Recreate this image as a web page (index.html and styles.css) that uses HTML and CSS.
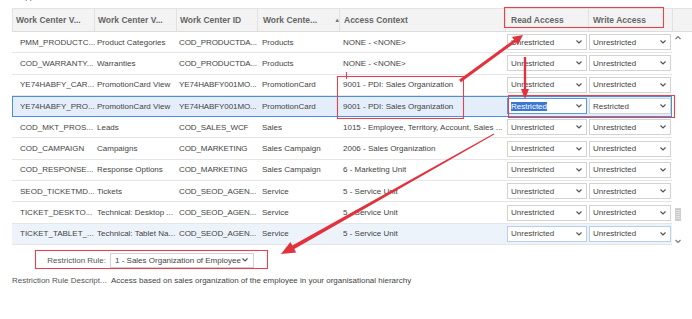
FILE: index.html
```html
<!DOCTYPE html>
<html lang="en">
<head>
    <meta charset="UTF-8">
    <meta name="viewport" content="width=device-width, initial-scale=1.0">
    <title>Access Restrictions</title>
    <link rel="stylesheet" href="styles.css">
</head>
<body>
    <div class="page">
        <div class="top"><span>Application</span></div>

        <div class="table">
            <div class="thead">
                <div class="th c1">Work Center V...</div>
                <div class="th c2">Work Center V...</div>
                <div class="th c3">Work Center ID</div>
                <div class="th c4">Work Cente... <span class="sort">&#9650;</span></div>
                <div class="th c5">Access Context</div>
                <div class="th c6">Read Access</div>
                <div class="th c7">Write Access</div>
                <div class="th cs"></div>
            </div>

            <div class="tbody">
                <div class="rows">
                    <div class="row">
                        <div class="td c1">PMM_PRODUCTC...</div>
                        <div class="td c2">Product Categories</div>
                        <div class="td c3">COD_PRODUCTDA...</div>
                        <div class="td c4">Products</div>
                        <div class="td c5">NONE - &lt;NONE&gt;</div>
                        <div class="td c6"><div class="dd"><span>Unrestricted</span><svg class="chev" viewBox="0 0 6 4"><path d="M0.5 0.5 L3 3 L5.5 0.5"/></svg></div></div>
                        <div class="td c7"><div class="dd"><span>Unrestricted</span><svg class="chev" viewBox="0 0 6 4"><path d="M0.5 0.5 L3 3 L5.5 0.5"/></svg></div></div>
                    </div>
                    <div class="row">
                        <div class="td c1">COD_WARRANTY...</div>
                        <div class="td c2">Warranties</div>
                        <div class="td c3">COD_PRODUCTDA...</div>
                        <div class="td c4">Products</div>
                        <div class="td c5">NONE - &lt;NONE&gt;</div>
                        <div class="td c6"><div class="dd"><span>Unrestricted</span><svg class="chev" viewBox="0 0 6 4"><path d="M0.5 0.5 L3 3 L5.5 0.5"/></svg></div></div>
                        <div class="td c7"><div class="dd"><span>Unrestricted</span><svg class="chev" viewBox="0 0 6 4"><path d="M0.5 0.5 L3 3 L5.5 0.5"/></svg></div></div>
                    </div>
                    <div class="row">
                        <div class="td c1">YE74HABFY_CAR...</div>
                        <div class="td c2">PromotionCard View</div>
                        <div class="td c3">YE74HABFY001MO...</div>
                        <div class="td c4">PromotionCard</div>
                        <div class="td c5">9001 - PDI: Sales Organization</div>
                        <div class="td c6"><div class="dd"><span>Unrestricted</span><svg class="chev" viewBox="0 0 6 4"><path d="M0.5 0.5 L3 3 L5.5 0.5"/></svg></div></div>
                        <div class="td c7"><div class="dd"><span>Unrestricted</span><svg class="chev" viewBox="0 0 6 4"><path d="M0.5 0.5 L3 3 L5.5 0.5"/></svg></div></div>
                    </div>
                    <div class="row selected">
                        <div class="td c1">YE74HABFY_PRO...</div>
                        <div class="td c2">PromotionCard View</div>
                        <div class="td c3">YE74HABFY001MO...</div>
                        <div class="td c4">PromotionCard</div>
                        <div class="td c5">9001 - PDI: Sales Organization</div>
                        <div class="td c6"><div class="dd focus"><span class="hl">Restricted</span><svg class="chev" viewBox="0 0 6 4"><path d="M0.5 0.5 L3 3 L5.5 0.5"/></svg></div></div>
                        <div class="td c7"><div class="dd"><span>Restricted</span><svg class="chev" viewBox="0 0 6 4"><path d="M0.5 0.5 L3 3 L5.5 0.5"/></svg></div></div>
                    </div>
                    <div class="row">
                        <div class="td c1">COD_MKT_PROS...</div>
                        <div class="td c2">Leads</div>
                        <div class="td c3">COD_SALES_WCF</div>
                        <div class="td c4">Sales</div>
                        <div class="td c5">1015 - Employee, Territory, Account, Sales ...</div>
                        <div class="td c6"><div class="dd"><span>Unrestricted</span><svg class="chev" viewBox="0 0 6 4"><path d="M0.5 0.5 L3 3 L5.5 0.5"/></svg></div></div>
                        <div class="td c7"><div class="dd"><span>Unrestricted</span><svg class="chev" viewBox="0 0 6 4"><path d="M0.5 0.5 L3 3 L5.5 0.5"/></svg></div></div>
                    </div>
                    <div class="row">
                        <div class="td c1">COD_CAMPAIGN</div>
                        <div class="td c2">Campaigns</div>
                        <div class="td c3">COD_MARKETING</div>
                        <div class="td c4">Sales Campaign</div>
                        <div class="td c5">2006 - Sales Organization</div>
                        <div class="td c6"><div class="dd"><span>Unrestricted</span><svg class="chev" viewBox="0 0 6 4"><path d="M0.5 0.5 L3 3 L5.5 0.5"/></svg></div></div>
                        <div class="td c7"><div class="dd"><span>Unrestricted</span><svg class="chev" viewBox="0 0 6 4"><path d="M0.5 0.5 L3 3 L5.5 0.5"/></svg></div></div>
                    </div>
                    <div class="row">
                        <div class="td c1">COD_RESPONSE...</div>
                        <div class="td c2">Response Options</div>
                        <div class="td c3">COD_MARKETING</div>
                        <div class="td c4">Sales Campaign</div>
                        <div class="td c5">6 - Marketing Unit</div>
                        <div class="td c6"><div class="dd"><span>Unrestricted</span><svg class="chev" viewBox="0 0 6 4"><path d="M0.5 0.5 L3 3 L5.5 0.5"/></svg></div></div>
                        <div class="td c7"><div class="dd"><span>Unrestricted</span><svg class="chev" viewBox="0 0 6 4"><path d="M0.5 0.5 L3 3 L5.5 0.5"/></svg></div></div>
                    </div>
                    <div class="row">
                        <div class="td c1">SEOD_TICKETMD...</div>
                        <div class="td c2">Tickets</div>
                        <div class="td c3">COD_SEOD_AGEN...</div>
                        <div class="td c4">Service</div>
                        <div class="td c5">5 - Service Unit</div>
                        <div class="td c6"><div class="dd"><span>Unrestricted</span><svg class="chev" viewBox="0 0 6 4"><path d="M0.5 0.5 L3 3 L5.5 0.5"/></svg></div></div>
                        <div class="td c7"><div class="dd"><span>Unrestricted</span><svg class="chev" viewBox="0 0 6 4"><path d="M0.5 0.5 L3 3 L5.5 0.5"/></svg></div></div>
                    </div>
                    <div class="row">
                        <div class="td c1">TICKET_DESKTO...</div>
                        <div class="td c2">Technical: Desktop ...</div>
                        <div class="td c3">COD_SEOD_AGEN...</div>
                        <div class="td c4">Service</div>
                        <div class="td c5">5 - Service Unit</div>
                        <div class="td c6"><div class="dd"><span>Unrestricted</span><svg class="chev" viewBox="0 0 6 4"><path d="M0.5 0.5 L3 3 L5.5 0.5"/></svg></div></div>
                        <div class="td c7"><div class="dd"><span>Unrestricted</span><svg class="chev" viewBox="0 0 6 4"><path d="M0.5 0.5 L3 3 L5.5 0.5"/></svg></div></div>
                    </div>
                    <div class="row hover">
                        <div class="td c1">TICKET_TABLET_...</div>
                        <div class="td c2">Technical: Tablet Na...</div>
                        <div class="td c3">COD_SEOD_AGEN...</div>
                        <div class="td c4">Service</div>
                        <div class="td c5">5 - Service Unit</div>
                        <div class="td c6"><div class="dd soft"><span>Unrestricted</span><svg class="chev" viewBox="0 0 6 4"><path d="M0.5 0.5 L3 3 L5.5 0.5"/></svg></div></div>
                        <div class="td c7"><div class="dd soft"><span>Unrestricted</span><svg class="chev" viewBox="0 0 6 4"><path d="M0.5 0.5 L3 3 L5.5 0.5"/></svg></div></div>
                    </div>
                </div>

                <div class="scroll">
                    <svg class="sarrow" viewBox="0 0 6 4"><path d="M0.5 3.5 L3 1 L5.5 3.5"/></svg>
                    <div class="thumb"></div>
                    <svg class="sarrow down" viewBox="0 0 6 4"><path d="M0.5 0.5 L3 3 L5.5 0.5"/></svg>
                </div>
            </div>
        </div>

        <div class="form">
            <div class="field">
                <div class="label">Restriction Rule:</div>
                <div class="dd rule"><span>1 - Sales Organization of Employee</span><svg class="chev" viewBox="0 0 6 4"><path d="M0.5 0.5 L3 3 L5.5 0.5"/></svg></div>
            </div>
            <div class="field desc">
                <div class="label">Restriction Rule Descript...</div>
                <div class="value">Access based on sales organization of the employee in your organisational hierarchy</div>
            </div>
        </div>

        <!-- red markup drawn over the screenshot -->
        <svg class="marks" viewBox="0 0 692 319">
            <rect x="504.5" y="7.5" width="159" height="20"/>
            <rect x="337.5" y="76.5" width="126" height="42"/>
            <rect x="508.5" y="95.5" width="166" height="22"/>
            <rect x="35.5" y="250.5" width="232" height="18"/>
            <line x1="346.5" y1="72" x2="346.5" y2="79"/>
            <polygon points="460.9,82.2 515.8,42.1 517.9,44.9 523,35 511.9,36.9 514,39.7 459.1,79.8"/>
            <polygon points="523.8,57 526.2,57 526.2,89 529,89 525,99 521,89 523.8,89"/>
            <polygon points="494.2,134.4 294.3,249 296.2,252.5 281,254 290.4,241.9 292.3,245.5 493.8,133.6"/>
        </svg>
    </div>
</body>
</html>
```

FILE: styles.css
```css
body {
    margin: 0;
    background: #fff;
    font-family: 'Liberation Sans', Arial, sans-serif;
    font-size: 8px;
    color: #444;
}
.page {
    position: relative;
    width: 692px;
    height: 319px;
    overflow: hidden;
}
.top {
    height: 8px;
    overflow: hidden;
    padding-left: 20px;
    color: #555;
}
.top span {
    display: block;
    line-height: 9px;
    margin-top: -8px;
}
.table {
    margin-left: 12px;
}
.thead {
    display: flex;
    height: 24px;
    box-sizing: border-box;
    background: #f3f3f3;
    border-top: 1px solid #e3e3e3;
    border-bottom: 1px solid #dcdcdc;
}
.th {
    display: flex;
    align-items: center;
    box-sizing: border-box;
    border-left: 1px solid #e2e2e2;
    font-size: 8.5px;
    font-weight: bold;
    color: #666;
    white-space: nowrap;
    overflow: hidden;
}
.th.c1 { padding-left: 3px; }
.th.c2, .th.c3 { padding-left: 3px; }
.th.c4 { padding-left: 5px; }
.th.c5 { padding-left: 4px; }
.th.c6 { padding-left: 5px; }
.th.c7 { padding-left: 4px; }
.th.cs { width: 10px; }
.sort {
    font-size: 6px;
    color: #777;
    margin-left: 17px;
}
.c1 { width: 82px; }
.c2 { width: 82px; }
.c3 { width: 81px; }
.c4 { width: 82px; }
.c5 { width: 166px; }
.c6 { width: 83px; }
.c7 { width: 84px; }
.tbody {
    display: flex;
}
.rows {
    width: 660px;
}
.row {
    display: flex;
    align-items: center;
    height: 21.3px;
    box-sizing: border-box;
    border-bottom: 1px solid #e6e6e6;
}
.row.selected {
    background: #e4eefa;
    outline: 1px solid #4a8fd8;
    outline-offset: -1px;
}
.row.hover {
    background: #edf3fa;
}
.td {
    box-sizing: border-box;
    white-space: nowrap;
    padding-left: 3px;
}
.td.c1 { padding-left: 8px; }
.td.c3 { letter-spacing: -0.1px; }
.td.c4 { padding-left: 5px; }
.td.c5 { padding-left: 4px; }
.td.c6 { padding-left: 2px; }
.td.c7 { padding-left: 1px; }
.dd {
    display: flex;
    align-items: center;
    justify-content: space-between;
    height: 16px;
    box-sizing: border-box;
    border: 1px solid #d2d2d2;
    background: #fff;
    padding: 0 4px 0 3px;
    color: #444;
}
.td.c6 .dd { width: 80px; }
.td.c7 .dd { width: 82px; }
.dd.focus {
    border-color: #5a9ad8;
}
.dd.soft {
    border-color: #b9d0e8;
}
.hl {
    background: #3a78d4;
    color: #fff;
}
.chev {
    width: 6px;
    height: 4px;
    fill: none;
    stroke: #555;
    stroke-width: 1.2;
}
.scroll {
    width: 12px;
    display: flex;
    flex-direction: column;
    align-items: center;
    padding-top: 3px;
}
.sarrow {
    width: 6px;
    height: 5px;
    fill: none;
    stroke: #777;
    stroke-width: 1.1;
}
.thumb {
    width: 4px;
    height: 11px;
    margin-top: 168px;
    background: repeating-linear-gradient(#c8c8c8 0 1px, #e4e4e4 1px 2px);
    border: 1px solid #cfcfcf;
}
.sarrow.down {
    margin-top: 18px;
}
.form {
    padding-left: 12px;
    margin-top: 8px;
}
.field {
    display: flex;
    align-items: center;
}
.label {
    width: 94px;
    text-align: right;
    color: #555;
    white-space: nowrap;
}
.dd.rule {
    width: 144px;
    height: 15px;
    margin-left: 4px;
    padding: 0 5px 0 4px;
}
.field.desc {
    margin-top: 8px;
}
.field.desc .label {
    text-align: left;
}
.value {
    margin-left: 5px;
    color: #444;
}
.marks {
    position: absolute;
    top: 0;
    left: 0;
    width: 692px;
    height: 319px;
    pointer-events: none;
}
.marks rect,
.marks line {
    fill: none;
    stroke: #e0444f;
    stroke-width: 1.1;
}
.marks polygon {
    fill: #e2323c;
}
```
